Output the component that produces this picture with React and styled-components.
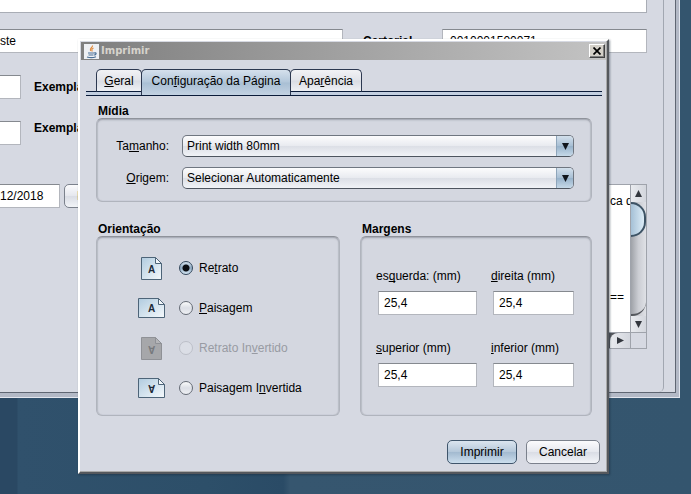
import React from "react"
import styled, { createGlobalStyle, css } from "styled-components"

const Page = createGlobalStyle`
  * {
    box-sizing: border-box;
  }
  html,
  body,
  #root {
    height: 100%;
  }
  body {
    margin: 0;
    overflow: hidden;
  }
  body,
  input,
  select,
  button,
  textarea {
    font: 12px/14px "Liberation Sans", Arial, sans-serif;
    color: #000;
  }
  u {
    text-underline-offset: 1px;
    text-decoration-skip-ink: none;
  }
`

const Desktop = styled.main`
  position: relative;
  min-height: 100%;
  background: linear-gradient(90deg, #2a4863 17px, #30516c 18px, #2d4f69 30%, #2a4b66 41%, #36566f 42%, #34556e);
`

/* window behind the dialog */

const BackWindow = styled.section`
  position: absolute;
  inset: 0 11px auto 0;
  padding: 0 3px 4px 0;
  border: solid #e3e6ee;
  border-width: 0 1px 1px 0;
  background: #b3b9c6;
`

const BackBody = styled.div`
  padding-right: 11px;
  border: solid #5f6672;
  border-width: 0 1px 1px 0;
  background: #d6d9e2;
`

const BackPanel = styled.div`
  padding: 0 16px 43px 0;
  border-right: 1px solid #a2a7b1;
  border-radius: 0 0 5px 0;
`

const BlankArea = styled.div`
  height: 13px;
  margin-bottom: 16px;
  background: #fff;
  border: solid #a9adb5;
  border-width: 0 1px 1px 0;
`

const BackRow = styled.div`
  display: flex;
  align-items: ${p => p.$align || "center"};
  gap: ${p => p.$gap || 13}px;
  height: 24px;
  margin-bottom: 22px;
`

const TextField = styled.input`
  width: ${p => p.$width || "100%"};
  height: 24px;
  min-width: 0;
  padding: 0 5px;
  border: 1px solid #b3b6bd;
  border-top-color: #85898f;
  border-radius: 0;
  background: #fff;
  outline: none;
`

const BackField = styled(TextField)`
  flex: ${p => p.$flex || "none"};
  padding-left: 0;
  border-left-width: ${p => (p.$inset ? "1px" : 0)};
  ${p => p.$inset && "padding-left: 7px;"}
`

const BoldLabel = styled.label`
  width: ${p => p.$width || "auto"};
  font-weight: bold;
`

const LowerRow = styled.div`
  display: flex;
  justify-content: space-between;
  align-items: flex-start;
  margin-top: 39px;
`

const DateGroup = styled.div`
  display: flex;
  gap: 4px;
`

const buttonFace = css`
  border: 1px solid #7b818c;
  border-radius: 5px;
  background: linear-gradient(#fbfbfd, #e6e8ee 48%, #dadde5 52%, #f2f4f8);
`

const SmallButton = styled.button`
  width: 60px;
  height: 24px;
  padding: 0 12px;
  text-align: left;
  ${buttonFace}
`

const ScrollPane = styled.div`
  display: grid;
  grid-template: 147px 16px / 160px 16px;
  border: 1px solid #9fa3ab;
  background: #d6d9e2;
`

const Notes = styled.textarea`
  padding: 8px 0 0 140px;
  border: 0;
  background: #fff;
  resize: none;
  overflow: hidden;
  white-space: pre;
  line-height: 16px;
  outline: none;
`

const VerticalBar = styled.div`
  display: flex;
  flex-direction: column;
  border-left: 1px solid #9fa3ab;
  background: linear-gradient(90deg, #9fa2a8, #cbcdd3 50%, #dfe1e6);
`

const ArrowCap = styled.div`
  display: grid;
  place-items: center;
  height: ${p => p.$height || 16}px;
  background: linear-gradient(90deg, #e9ebef, #d3d6dd);
`

const Thumb = styled.div`
  height: 35px;
  border: solid #3d5365;
  border-width: 2px 2px 2px 0;
  border-radius: 0 18px 18px 0;
  background: linear-gradient(90deg, #a5c0d6, #dcecf7);
`

const Track = styled.div`
  flex: 1;
  border-bottom: 2px solid #55585e;
  border-radius: 0 0 14px 0;
`

const HorizontalBar = styled.div`
  display: flex;
  justify-content: flex-end;
  border-top: 1px solid #9fa3ab;
  background: #55585e;
`

const RightCap = styled(ArrowCap)`
  width: 20px;
  border-radius: 8px 0 0 0;
`

const Corner = styled.div`
  border: solid #9fa3ab;
  border-width: 1px 0 0 1px;
`

/* print dialog */

const Dialog = styled.form`
  position: absolute;
  inset: 39px 82px auto 78px;
  padding: 1px;
  border: 2px solid;
  border-color: #fff #55585d #55585d #fff;
  background: #d6d9e2;
  box-shadow: inset -1px -1px #a9a9a9, 1px 1px 2px rgba(20, 35, 50, 0.45);
`

const TitleBar = styled.header`
  display: flex;
  align-items: center;
  gap: 2px;
  height: 18px;
  padding: 0 1px 0 3px;
  background: linear-gradient(90deg, #7f7f7f, #c3c3c3);
`

const Title = styled.h1`
  flex: 1;
  margin: 0;
  color: #d6d3cc;
  font: bold 10px/14px "DejaVu Sans", sans-serif;
`

const CloseButton = styled.button`
  display: grid;
  place-items: center;
  width: 16px;
  height: 14px;
  padding: 0;
  border: 1px solid;
  border-color: #fff #404040 #404040 #fff;
  background: #d4d0c8;
  box-shadow: inset -1px -1px #808080;
`

const Tabs = styled.div`
  display: flex;
  position: relative;
  margin: 9px 4px 0 5px;
  padding: 0 10px;
  height: 27px;
  background: linear-gradient(#0b1c3a, #0b1c3a) 0 22px / 100% 1px no-repeat,
    linear-gradient(#c3cfe0, #c3cfe0) 0 23px / 100% 3px no-repeat,
    linear-gradient(#0b1c3a, #0b1c3a) 0 26px / 100% 1px no-repeat;
`

const Tab = styled.button`
  flex: 0 0 ${p => p.$width}px;
  height: ${p => (p.$active ? 26 : 23)}px;
  margin-right: -1px;
  padding: 0 0 ${p => (p.$active ? 3 : 0)}px;
  border: 1px solid #2c3850;
  border-bottom: ${p => (p.$active ? "0" : "1px solid #0b1c3a")};
  border-radius: 5px 5px 0 0;
  background: ${p =>
    p.$active
      ? "linear-gradient(#d5e0ec, #b3c7da 48%, #a9bfd4 52%, #c3d2e2)"
      : "linear-gradient(#f1f2f5, #e2e4ea 48%, #d9dce3 52%, #eef0f4)"};
`

const Content = styled.div`
  padding: 8px 14px 0 15px;
`

const Groups = styled.div`
  display: grid;
  grid-template-columns: 244fr 232fr;
  gap: 20px;
  margin-top: 20px;
`

const Group = styled.section`
  display: flex;
  flex-direction: column;
`

const GroupTitle = styled.h2`
  margin: 0 2px;
  font-size: 12px;
  line-height: 14px;
`

const GroupBox = styled.div`
  flex: 1;
  padding: ${p => p.$padding};
  border: 1px solid #b0b4bd;
  border-top-color: #8f939b;
  border-radius: 6px;
  background: #d4d7e0;
  box-shadow: inset 0 2px 2px -1px rgba(90, 95, 105, 0.4), inset 1px 0 1px rgba(90, 95, 105, 0.2),
    inset -1px 0 1px rgba(90, 95, 105, 0.2);
`

const MediaFields = styled.div`
  display: grid;
  grid-template-columns: 57px 1fr;
  gap: 10px 13px;
  align-items: center;
`

const MediaLabel = styled.label`
  text-align: right;
`

const Combo = styled.div`
  position: relative;
  height: 22px;
  border: 1px solid #6f7680;
  border-bottom-color: #4e555f;
  border-radius: 5px;
  overflow: hidden;
  background: linear-gradient(#fcfcfd, #e9ebf0 48%, #dcdfe6 52%, #f1f3f7);

  select {
    width: 100%;
    height: 100%;
    padding: 0 20px 0 4px;
    border: 0;
    background: none;
    appearance: none;
    outline: none;
  }
`

const ComboArrow = styled.span`
  position: absolute;
  inset: 0 0 0 auto;
  display: grid;
  place-items: center;
  width: 17px;
  border-left: 1px solid #8ea5ba;
  background: linear-gradient(#d3e0ec, #a9c0d5 48%, #98b3cb 52%, #c6d9e8);
  pointer-events: none;
`

const OrientationRow = styled.label`
  display: grid;
  grid-template-columns: 27px 14px 1fr;
  align-items: center;
  height: 40px;
  column-gap: 14px;
  color: ${p => (p.$disabled ? "#989ba3" : "#000")};

  svg {
    justify-self: center;
  }
  span {
    margin-left: -8px;
  }
`

const Radio = styled.input`
  appearance: none;
  width: 14px;
  height: 14px;
  margin: 0;
  border: 1px solid #656b76;
  border-radius: 50%;
  background: linear-gradient(#fafbfc, #dcdfe6 50%, #eef0f4);

  &:checked {
    border-color: #33475c;
    background: radial-gradient(circle, #0b0d12 3px, transparent 4px), linear-gradient(#d3e0ec, #8fa9c1 50%, #d5e6f3);
  }
  &:disabled {
    border-color: #bcbfc8;
    background: #dbdee6;
  }
`

const Margins = styled.div`
  display: grid;
  grid-template-columns: 103fr 85fr;
  gap: 26px 12px;
`

const MarginLabel = styled.label`
  display: block;
  line-height: 14px;

  input {
    display: block;
    width: calc(100% - 4px);
    margin: 8px 2px 0;
  }
`

const Actions = styled.footer`
  display: flex;
  justify-content: flex-end;
  gap: 9px;
  padding: 24px 6px 7px;
`

const ActionButton = styled.button`
  width: ${p => p.$width}px;
  height: 24px;
  padding: 0;
  ${buttonFace}
  ${p =>
    p.$primary &&
    css`
      border-color: #3f556b;
      background: linear-gradient(#dbe5ef, #b5c8da 48%, #a3bad0 52%, #cbdeed);
    `}
`

const JavaIcon = () => (
  <svg width="15" height="15" viewBox="0 0 15 15" aria-hidden="true">
    <rect width="15" height="15" fill="#eef0f4" />
    <path d="M8.500 1.500C9 3.500 5 4.500 6.500 7M9.500 4C7.500 5 7.500 6 8.300 7.500" fill="none" stroke="#e08a3c" strokeWidth="1.200" />
    <path d="M4 9h6M4.500 11h5M10 9c3-1 2.500 2 0 2M3 13c3 1 6 1 9-.3" fill="none" stroke="#4a6f96" strokeWidth="1.200" />
  </svg>
)

const Triangle = ({ d, fill = "#33373e" }) => (
  <svg width="9" height="9" viewBox="0 0 9 9" aria-hidden="true">
    <path d={d} fill={fill} />
  </svg>
)

const UP = "M4.500 1L8 8H1z"
const DOWN = "M1 1h7L4.500 8z"
const RIGHT = "M1 1v7l7-3.500z"

const PageIcon = ({ landscape, inverted, disabled }) => {
  const w = landscape ? 27 : 21
  const h = landscape ? 20 : 23
  const stroke = disabled ? "#8f9196" : "#4d6478"
  const id = `sheet-${w}-${inverted ? "inv" : "std"}`
  return (
    <svg width={w} height={h} viewBox={`0 0 ${w} ${h}`} aria-hidden="true">
      <defs>
        <linearGradient id={id} x1="0" y1="0" x2="1" y2="1">
          <stop offset="0" stopColor={disabled ? "#a6a7aa" : "#b0cbdf"} />
          <stop offset="1" stopColor={disabled ? "#a6a7aa" : "#f5f9fc"} />
        </linearGradient>
      </defs>
      <path d={`M.5.5H${w - 6.5}L${w - 0.5} 6.500V${h - 0.5}H.5z`} fill={`url(#${id})`} stroke={stroke} />
      <path d={`M${w - 6.5}.5V6.500H${w - 0.5}z`} fill={disabled ? "#b4b5b8" : "#f2f6fa"} stroke={stroke} />
      <text
        x={w / 2}
        y={h / 2 + 4}
        textAnchor="middle"
        fontSize="10"
        fontWeight="bold"
        fill={disabled ? "#77797d" : "#1d2a38"}
        transform={inverted ? `rotate(180 ${w / 2} ${h / 2 + 0.5})` : undefined}
      >
        A
      </text>
    </svg>
  )
}

const Select = ({ id, value }) => (
  <Combo>
    <select id={id} defaultValue={value}>
      <option>{value}</option>
    </select>
    <ComboArrow>
      <Triangle d={DOWN} fill="#10151c" />
    </ComboArrow>
  </Combo>
)

const orientations = [
  { id: "retrato", label: <>Re<u>t</u>rato</> },
  { id: "paisagem", label: <><u>P</u>aisagem</>, landscape: true },
  { id: "retrato-inv", label: <>Retrato In<u>v</u>ertido</>, inverted: true, disabled: true },
  { id: "paisagem-inv", label: <>Paisagem I<u>n</u>vertida</>, landscape: true, inverted: true },
]

const margins = [
  { id: "esquerda", label: <>es<u>q</u>uerda: (mm)</> },
  { id: "direita", label: <><u>d</u>ireita (mm)</> },
  { id: "superior", label: <><u>s</u>uperior (mm)</> },
  { id: "inferior", label: <><u>i</u>nferior (mm)</> },
]

const Background = () => (
  <BackWindow>
    <BackBody>
      <BackPanel>
        <BlankArea />
        <BackRow $gap={20}>
          <BackField $flex="1" defaultValue="ste" aria-label="Nome" />
          <BoldLabel $width="59px" htmlFor="cartorial">Cartorial</BoldLabel>
          <BackField id="cartorial" $inset $width="205px" defaultValue="0010001500071" />
        </BackRow>
        <BackRow>
          <BackField $width="21px" id="exemplar-1" />
          <BoldLabel htmlFor="exemplar-1">Exemplar</BoldLabel>
        </BackRow>
        <BackRow $align="flex-start">
          <BackField $width="21px" id="exemplar-2" />
          <BoldLabel htmlFor="exemplar-2">Exemplar</BoldLabel>
        </BackRow>
        <LowerRow>
          <DateGroup>
            <BackField $width="60px" defaultValue="12/2018" aria-label="Data" />
            <SmallButton type="button">Imprimir</SmallButton>
          </DateGroup>
          <ScrollPane>
            <Notes readOnly wrap="off" aria-label="Texto" defaultValue={"ca d\n\n\n\n\n\n=="} />
            <VerticalBar>
              <ArrowCap $height={17}><Triangle d={UP} /></ArrowCap>
              <Thumb />
              <Track />
              <ArrowCap><Triangle d={DOWN} /></ArrowCap>
            </VerticalBar>
            <HorizontalBar>
              <RightCap $height={15}><Triangle d={RIGHT} /></RightCap>
            </HorizontalBar>
            <Corner />
          </ScrollPane>
        </LowerRow>
      </BackPanel>
    </BackBody>
  </BackWindow>
)

const App = () => (
  <Desktop>
    <Page />
    <Background />
    <Dialog onSubmit={e => e.preventDefault()}>
      <TitleBar>
        <JavaIcon />
        <Title>Imprimir</Title>
        <CloseButton type="button" aria-label="Fechar">
          <svg width="8" height="8" viewBox="0 0 8 8">
            <path d="M.5.5l7 7M7.500.5l-7 7" stroke="#000" strokeWidth="1.700" />
          </svg>
        </CloseButton>
      </TitleBar>
      <Tabs role="tablist">
        <Tab type="button" role="tab" $width={46}><u>G</u>eral</Tab>
        <Tab type="button" role="tab" $width={150} $active aria-selected="true">Con<u>f</u>iguração da Página</Tab>
        <Tab type="button" role="tab" $width={72}>Apa<u>r</u>ência</Tab>
      </Tabs>
      <Content>
        <Group>
          <GroupTitle>Mídia</GroupTitle>
          <GroupBox $padding="16px 17px 12px 15px">
            <MediaFields>
              <MediaLabel htmlFor="tamanho">Ta<u>m</u>anho:</MediaLabel>
              <Select id="tamanho" value="Print width 80mm" />
              <MediaLabel htmlFor="origem"><u>O</u>rigem:</MediaLabel>
              <Select id="origem" value="Selecionar Automaticamente" />
            </MediaFields>
          </GroupBox>
        </Group>
        <Groups>
          <Group>
            <GroupTitle>Orientação</GroupTitle>
            <GroupBox $padding="11px 0 7px 41px">
              {orientations.map(o => (
                <OrientationRow key={o.id} $disabled={o.disabled}>
                  <PageIcon landscape={o.landscape} inverted={o.inverted} disabled={o.disabled} />
                  <Radio type="radio" name="orientacao" disabled={o.disabled} defaultChecked={o.id === "retrato"} />
                  <span>{o.label}</span>
                </OrientationRow>
              ))}
            </GroupBox>
          </Group>
          <Group>
            <GroupTitle>Margens</GroupTitle>
            <GroupBox $padding="32px 15px 0">
              <Margins>
                {margins.map(m => (
                  <MarginLabel key={m.id}>
                    {m.label}
                    <TextField defaultValue="25,4" />
                  </MarginLabel>
                ))}
              </Margins>
            </GroupBox>
          </Group>
        </Groups>
      </Content>
      <Actions>
        <ActionButton $width={70} $primary>Imprimir</ActionButton>
        <ActionButton $width={74} type="button">Cancelar</ActionButton>
      </Actions>
    </Dialog>
  </Desktop>
)

export default App
